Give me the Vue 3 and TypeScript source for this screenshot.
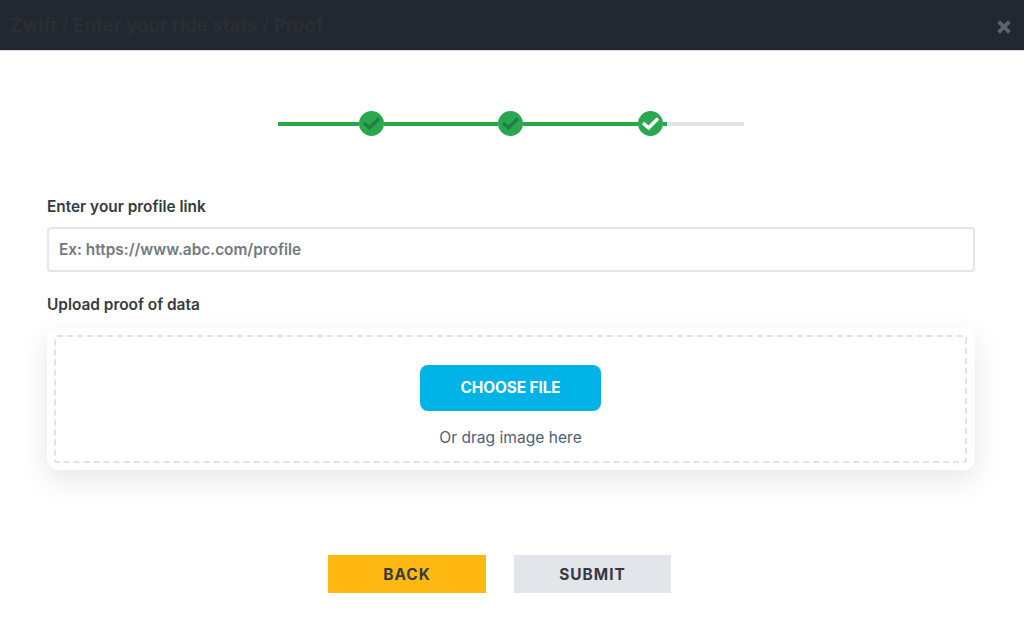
<script setup lang="ts">
const steps: { lead: string; done: boolean }[] = [
  { lead: 'seg-a', done: true },
  { lead: 'seg-b', done: true },
  { lead: 'seg-c', done: false },
]
</script>

<template>
  <div class="modal">
    <header class="head">
      <h1 class="title">Zwift / Enter your ride stats / Proof</h1>
      <svg class="close" width="16" height="16" viewBox="0 0 16 16" aria-hidden="true">
        <path d="M2.6 2.6 L13.4 13.4 M13.4 2.6 L2.6 13.4" stroke="#5b626b" stroke-width="3.8" fill="none" />
      </svg>
    </header>

    <div class="stepper">
      <template v-for="s in steps" :key="s.lead">
        <span class="seg" :class="s.lead"></span>
        <span class="dot">
          <svg width="25" height="25" viewBox="0 0 25 25" aria-hidden="true">
            <path
              d="M5 12 L10.6 16.8 L20 7.6"
              fill="none"
              :stroke="s.done ? '#237f42' : '#ffffff'"
              stroke-width="3.5"
            />
          </svg>
        </span>
      </template>
      <span class="seg seg-d"></span>
    </div>

    <form class="form" @submit.prevent>
      <label class="label" for="link">Enter your profile link</label>
      <input id="link" class="input" type="text" placeholder="Ex: https://www.abc.com/profile" />

      <div class="label label-upload">Upload proof of data</div>
      <div class="card">
        <div class="drop">
          <button type="button" class="choose">CHOOSE FILE</button>
          <p class="hint">Or drag image here</p>
        </div>
      </div>

      <div class="actions">
        <button type="button" class="btn back">BACK</button>
        <button type="submit" class="btn submit">SUBMIT</button>
      </div>
    </form>
  </div>
</template>

<style>
html, body { margin: 0; background: #fff; }
</style>

<style scoped>
.modal {
  width: 1024px;
  height: 632px;
  overflow: hidden;
  background: #fff;
  font-family: Inter, "Liberation Sans", sans-serif;
}
.head {
  height: 51px;
  box-sizing: border-box;
  background: #222831;
  border-bottom: 1px solid #d9dadb;
  display: flex;
  align-items: center;
  justify-content: space-between;
  padding: 0 12px 0 10px;
}
.title {
  margin: 0;
  font-size: 18.72px;
  font-weight: 700;
  color: #2b2e32;
}
.close { margin-top: 4px; }
.stepper {
  display: flex;
  align-items: center;
  width: 466px;
  margin: 60px 0 0 278px;
  height: 25px;
}
.seg { height: 4px; background: #28a745; }
.seg-a { width: 81px; }
.seg-b { width: 114px; }
.seg-c { width: 115px; }
.seg-d {
  width: 81px;
  background: linear-gradient(to right, #28a745 4px, #e2e3ea 4px);
}
.dot {
  width: 25px;
  height: 25px;
  border-radius: 50%;
  background: #2aa84f;
  display: block;
}
.dot svg { display: block; }
.form {
  margin: 0 49px 0 47px;
  padding-top: 62px;
}
.label {
  display: block;
  font-size: 15.4px;
  line-height: 17px;
  font-weight: 600;
  color: #343a40;
}
.input {
  display: block;
  width: 100%;
  box-sizing: border-box;
  height: 45px;
  margin-top: 12px;
  padding: 0 10px;
  border: 2px solid #e3e6ec;
  border-radius: 4px;
  outline: none;
  font: 600 15.4px Inter, "Liberation Sans", sans-serif;
  color: #343a40;
  background: #fff;
}
.input::placeholder { color: #74797f; opacity: 1; }
.label-upload { margin-top: 24px; }
.card {
  margin-top: 15px;
  height: 142px;
  box-sizing: border-box;
  padding: 7px 8px 7px 7px;
  background: #fff;
  border-radius: 12px;
  box-shadow: 0 10px 30px rgba(0, 0, 0, 0.1);
}
.drop {
  height: 100%;
  box-sizing: border-box;
  border: 2px dashed #e3e3e6;
  border-radius: 3px;
  display: flex;
  flex-direction: column;
  align-items: center;
  padding-top: 28px;
}
.choose {
  width: 181px;
  height: 46px;
  border: 0;
  border-radius: 8px;
  background: #00b3e6;
  color: #fff;
  font: 700 15.4px Inter, "Liberation Sans", sans-serif;
  letter-spacing: -0.1px;
  padding: 0 0 2px;
}
.hint {
  margin: 18px 0 0;
  font-size: 15.6px;
  line-height: 18px;
  color: #4f6174;
}
.actions {
  display: flex;
  justify-content: center;
  gap: 28px;
  margin-top: 85px;
  padding-right: 23px;
}
.btn {
  width: 158px;
  height: 38px;
  border: 0;
  padding: 0;
  font: 700 15.4px Inter, "Liberation Sans", sans-serif;
  letter-spacing: 1px;
  color: #343a40;
}
.back { background: #ffb812; }
.submit { background: #e2e5ea; width: 157px; }
</style>
